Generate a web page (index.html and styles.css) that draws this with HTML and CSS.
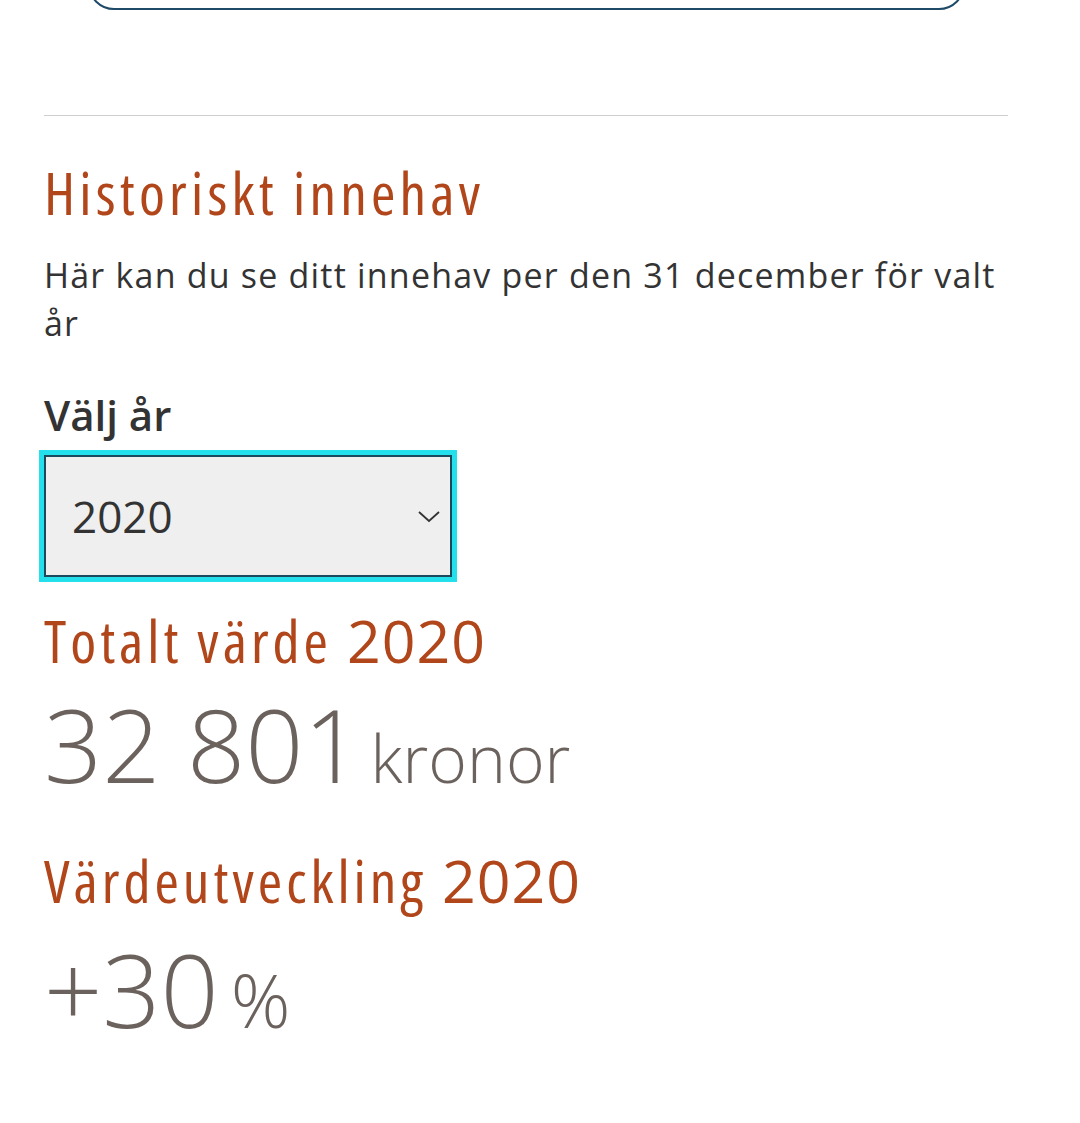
FILE: index.html
```html
<!DOCTYPE html>
<html lang="sv">
<head>
    <meta charset="UTF-8">
    <meta name="viewport" content="width=device-width, initial-scale=1.0">
    <title>Historiskt innehav</title>
    <link rel="stylesheet" href="styles.css">
</head>
<body>
    <div class="page">
        <!-- Knappen ovanför (syns bara nedre kanten) -->
        <div class="top-button"></div>

        <hr class="divider">

        <section class="history">
            <h2 class="title">Historiskt innehav</h2>
            <p class="intro">Här kan du se ditt innehav per den 31 december för valt år</p>

            <label class="year-label" for="year">Välj år</label>
            <div class="select-wrap">
                <select id="year" class="year-select">
                    <option>2020</option>
                    <option>2019</option>
                    <option>2018</option>
                </select>
                <svg class="chevron" width="22" height="12" viewBox="0 0 22 12">
                    <path d="M1 1 L11 10 L21 1" fill="none" stroke="#333" stroke-width="1.8"/>
                </svg>
            </div>

            <h3 class="stat-title">Totalt värde <span class="year">2020</span></h3>
            <div class="stat-value">32 801<span class="unit">kronor</span></div>

            <h3 class="stat-title">Värdeutveckling <span class="year">2020</span></h3>
            <div class="stat-value change">+30<span class="unit percent">%</span></div>
        </section>
    </div>
</body>
</html>
```

FILE: styles.css
```css
body {
    margin: 0;
    padding: 0;
    background: #fff;
    font-family: "Open Sans", sans-serif;
    color: #333;
}
.page {
    margin: 0 72px 0 44px;
}
.top-button {
    height: 86px;
    margin: -80px 43px 0 44px;
    border: 2px solid #1f4b69;
    border-radius: 26px;
}
.divider {
    border: none;
    border-top: 1px solid #cfcfcf;
    margin: 105px 0 0 0;
}
.title {
    color: #b1461b;
    font-weight: 400;
    font-stretch: 75%;
    font-size: 59px;
    letter-spacing: 4.2px;
    line-height: 72px;
    margin: 40px 0 0 0;
}
.intro {
    font-size: 34px;
    line-height: 48px;
    letter-spacing: 1.2px;
    margin: 23px 0 0 0;
}
.year-label {
    display: block;
    font-size: 42px;
    font-weight: 600;
    line-height: 56px;
    margin-top: 40px;
}
.select-wrap {
    position: relative;
    width: 408px;
    margin-top: 12px;
}
.year-select {
    appearance: none;
    -webkit-appearance: none;
    width: 100%;
    height: 122px;
    box-sizing: border-box;
    padding: 0 0 0 26px;
    background: #efefef;
    border: 2px solid #1b4a5c;
    border-radius: 0;
    outline: 5px solid #23e0ec;
    font-family: "Open Sans", sans-serif;
    font-size: 44px;
    color: #333;
}
.chevron {
    position: absolute;
    right: 12px;
    top: 56px;
    pointer-events: none;
}
.stat-title {
    color: #b1461b;
    font-weight: 400;
    font-stretch: 75%;
    font-size: 59px;
    letter-spacing: 4px;
    line-height: 72px;
    margin: 27px 0 0 0;
}
.stat-title .year {
    font-stretch: 100%;
    letter-spacing: 1px;
}
.stat-value {
    color: #6b625d;
    font-weight: 300;
    font-size: 102px;
    line-height: 120px;
    margin: 8px 0 7px 0;
}
.stat-value.change {
    margin-top: 13px;
}
.stat-value .unit {
    font-size: 66px;
    margin-left: 9px;
}
.stat-value .percent {
    font-size: 74px;
    margin-left: 12px;
}
```
